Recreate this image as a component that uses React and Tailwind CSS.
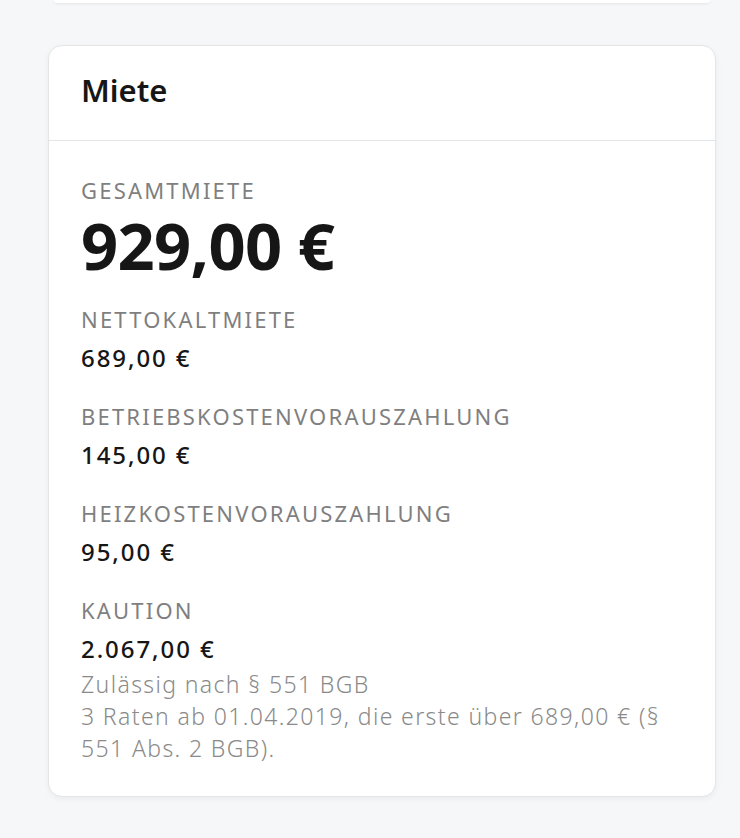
const rows = [
    { label: "Nettokaltmiete", value: "689,00 €" },
    { label: "Betriebskostenvorauszahlung", value: "145,00 €" },
    { label: "Heizkostenvorauszahlung", value: "95,00 €" },
];

function Label({ children, className = "" }) {
    return (
        <div
            className={`text-[22px] leading-[28px] tracking-[0.1em] uppercase text-[#7f7f7f] ${className}`}
        >
            {children}
        </div>
    );
}

function Value({ children, className = "" }) {
    return (
        <div
            className={`text-[24px] leading-[30px] font-medium tracking-[0.08em] text-[#161616] ${className}`}
        >
            {children}
        </div>
    );
}

export default function App() {
    return (
        <div
            className="min-h-[838px] bg-[#f6f7f9] flex flex-col"
            style={{ fontFamily: '"Noto Sans", "Open Sans", sans-serif' }}
        >
            <div className="ml-[54px] mr-[30px] h-[3px] bg-white rounded-b-[4px] shadow-[0_1px_3px_rgba(0,0,0,0.08)]" />

            <div className="mt-[42px] mx-[48px] w-[668px] bg-white border border-[#e4e5e7] rounded-[14px] shadow-[0_2px_6px_rgba(0,0,0,0.05)]">
                <div className="h-[95px] px-[32px] flex items-center border-b border-[#e4e5e7]">
                    <h2 className="text-[31px] leading-none font-semibold text-[#161616] pb-[5px]">
                        Miete
                    </h2>
                </div>

                <div className="px-[32px] pt-[35px] pb-[32px]">
                    <Label>Gesamtmiete</Label>
                    <div className="mt-[8px] text-[65px] leading-[66px] font-bold text-[#161616] tracking-[-0.01em]">
                        929,00 €
                    </div>

                    {rows.map((row, i) => (
                        <div key={row.label} className={i === 0 ? "mt-[27px]" : "mt-[29px]"}>
                            <Label>{row.label}</Label>
                            <Value className="mt-[10px]">{row.value}</Value>
                        </div>
                    ))}

                    <div className="mt-[29px]">
                        <Label>Kaution</Label>
                        <Value className="mt-[10px]">2.067,00 €</Value>
                        <div className="mt-[4px] text-[23px] leading-[32px] font-light tracking-[0.06em] text-[#8a8a8a]">
                            <div>Zulässig nach § 551 BGB</div>
                            <div>
                                3 Raten ab 01.04.2019, die erste über 689,00 € (§
                                551 Abs. 2 BGB).
                            </div>
                        </div>
                    </div>
                </div>
            </div>
        </div>
    );
}
